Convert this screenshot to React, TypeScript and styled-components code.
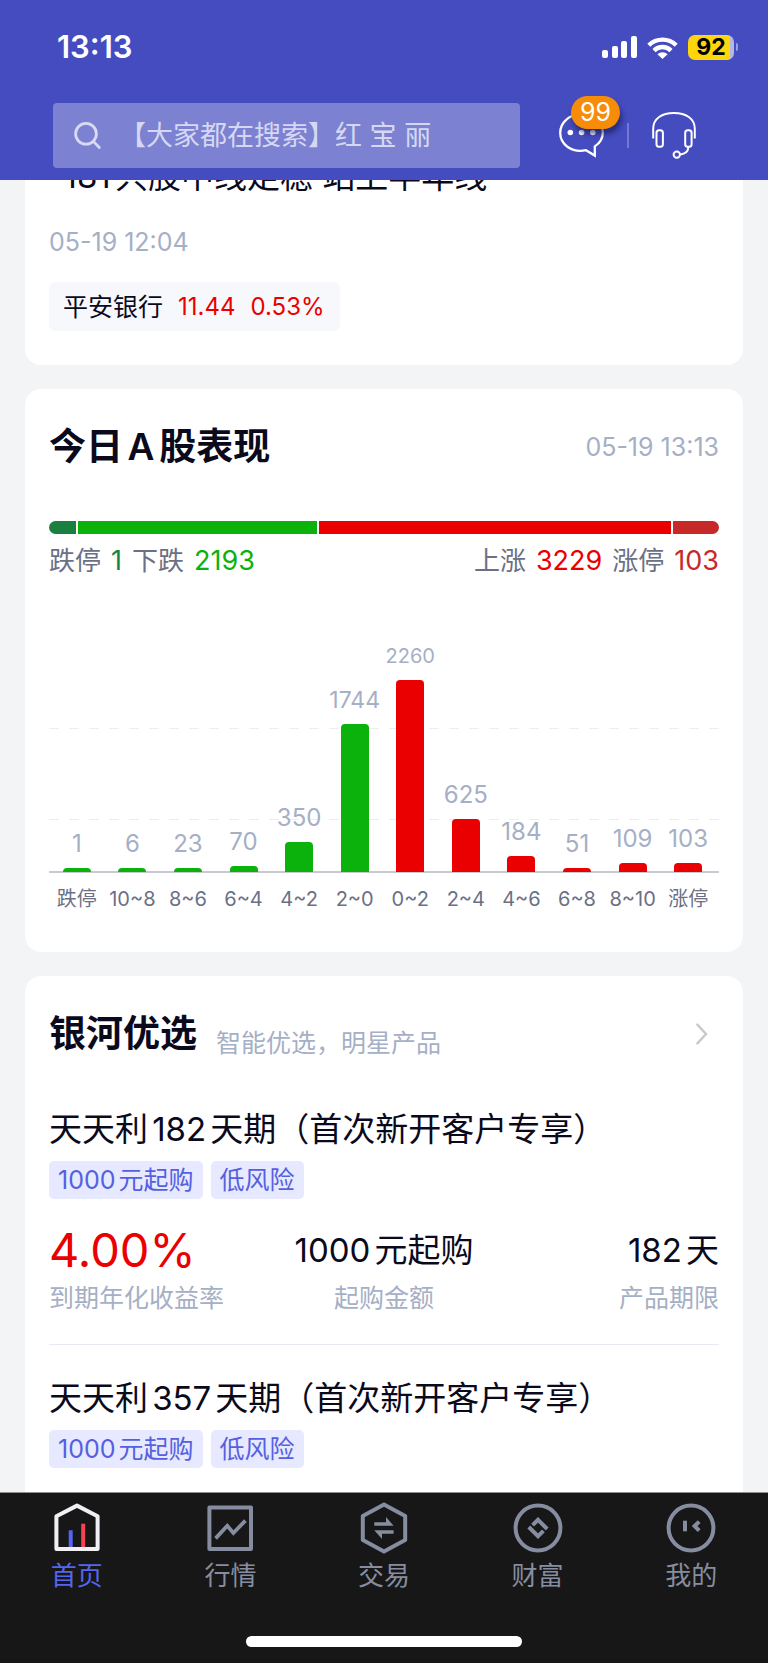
import React from 'react';
import styled, { createGlobalStyle } from 'styled-components';

const color = {
  brand: '#444cbf',
  ink: '#0a0a1c',
  slate: '#6b7085',
  muted: '#a5afc5',
  rise: '#ea0000',
  limitUp: '#c72828',
  fall: '#0bb20b',
  limitDown: '#1a8040',
  page: '#f3f4f6',
  tab: '#868da0',
};

const GlobalStyle = createGlobalStyle`
  *, *::before, *::after { box-sizing: border-box; }
  body {
    margin: 0;
    background: ${color.page};
    color: ${color.ink};
    font-family: Inter, "Noto Sans CJK SC", sans-serif;
    text-autospace: normal;
  }
  h2, h3, p, dl, dt, dd, ul { margin: 0; padding: 0; font-weight: 400; }
  button, input { font-family: inherit; }
  button { border: 0; padding: 0; background: none; color: inherit; cursor: pointer; }
  svg { display: block; }
`;

const Screen = styled.div`
  display: flex;
  flex-direction: column;
  height: 100vh;
  overflow: hidden;
`;

/* ---------- header ---------- */

const Header = styled.header`
  flex: none;
  padding-bottom: 12px;
  background: ${color.brand};
  color: #fff;
`;

const StatusBar = styled.div`
  display: flex;
  align-items: center;
  justify-content: space-between;
  height: 94px;
  padding: 0 30px 0 57px;
`;

const Clock = styled.time`
  font-size: 31px;
  line-height: 36px;
  font-weight: 600;
`;

const StatusIcons = styled.div`
  display: flex;
  align-items: center;
  gap: 10px;
`;

const Battery = styled.div`
  display: flex;
  align-items: center;
  gap: 2px;
`;

const BatteryBody = styled.span`
  width: 46px;
  height: 25px;
  border-radius: 7px;
  background: linear-gradient(to right, #ffd60a 42px, #b4b7e3 42px);
  color: #000;
  font-size: 23px;
  line-height: 25px;
  font-weight: 700;
  text-align: center;
`;

const BatteryTip = styled.span`
  width: 2px;
  height: 8px;
  border-radius: 0 2px 2px 0;
  background: #9a9edb;
`;

const SearchRow = styled.div`
  display: flex;
  align-items: center;
  gap: 23px;
  padding: 9px 72px 0 53px;
`;

const SearchBox = styled.label`
  flex: 1;
  display: flex;
  align-items: center;
  gap: 18px;
  min-width: 0;
  height: 65px;
  margin-right: 16px;
  padding-left: 21px;
  border-radius: 4px;
  background: #7c82d1;
`;

const SearchInput = styled.input`
  flex: 1;
  min-width: 0;
  height: 40px;
  padding: 0;
  border: 0;
  outline: 0;
  background: none;
  color: #fff;
  font-size: 27px;
  &::placeholder { color: #d6d8f3; opacity: 1; }
`;

const IconButton = styled.button`
  position: relative;
  flex: none;
`;

const Badge = styled.span`
  position: absolute;
  left: 12px;
  top: -17px;
  width: 49px;
  height: 33px;
  border-radius: 17px;
  background: #f78c08;
  box-shadow: 2px 5px 5px rgba(20, 24, 80, 0.6);
  font-size: 25px;
  line-height: 33px;
  text-align: center;
`;

const HeaderDivider = styled.span`
  width: 2px;
  height: 25px;
  background: #7379d1;
`;

/* ---------- feed ---------- */

const Feed = styled.main`
  flex: 1;
  min-height: 0;
  display: flex;
  flex-direction: column;
  gap: 24px;
  padding: 0 25px;
  overflow: hidden;
`;

const Card = styled.section`
  flex: none;
  padding: 34px 24px;
  border-radius: 16px;
  background: #fff;
`;

/* The feed is scrolled, so the top of this card lies behind the header. */
const NewsCard = styled(Card)`
  margin-top: -62px;
`;

const NewsTitle = styled.h3`
  font-size: 33px;
  line-height: 48px;
`;

const NewsTime = styled.p`
  margin-top: 26px;
  color: ${color.muted};
  font-size: 25px;
  line-height: 32px;
`;

const StockChip = styled.a`
  display: inline-flex;
  align-items: center;
  gap: 15px;
  height: 49px;
  margin-top: 24px;
  padding: 0 15px 0 14px;
  border-radius: 6px;
  background: #f7f8fc;
  color: ${color.ink};
  font-size: 25px;
  line-height: 32px;
  text-decoration: none;
  vertical-align: top;
`;

const StockFigure = styled.span`
  color: ${color.rise};
  font-size: 24px;
`;

const CardHead = styled.div`
  display: flex;
  align-items: center;
  justify-content: space-between;
`;

const CardTitle = styled.h2`
  font-size: 37px;
  line-height: 48px;
  font-weight: 600;
`;

const CardTime = styled.time`
  color: ${color.muted};
  font-size: 25px;
  line-height: 32px;
`;

/* ---------- market breadth ---------- */

const MarketCard = styled(Card)`
  padding-bottom: 41px;
`;

const Breadth = styled.div`
  display: flex;
  gap: 2px;
  height: 13px;
  margin-top: 50px;
  border-radius: 7px;
  overflow: hidden;
`;

const Segment = styled.span<{ $share: number; $color: string }>`
  flex: ${(p) => p.$share} 1 0;
  background: ${(p) => p.$color};
`;

const Legend = styled.div`
  display: flex;
  justify-content: space-between;
  margin-top: 9px;
  color: ${color.slate};
  font-size: 26px;
  line-height: 36px;
`;

const LegendGroup = styled.div`
  display: flex;
  gap: 10px;
`;

const Count = styled.span<{ $color: string }>`
  color: ${(p) => p.$color};
  font-size: 27px;
`;

const dash = 'repeating-linear-gradient(to right, #ededf0 0 10px, transparent 10px 20px)';

const Plot = styled.div`
  display: flex;
  height: 294px;
  padding-right: 3px;
  border-bottom: 2px solid #c9cad1;
  background:
    ${dash} 0 149px / 100% 1px no-repeat,
    ${dash} 0 240px / 100% 1px no-repeat;
`;

/* Bars overlap the upper pixel of the axis line. */
const Column = styled.div`
  flex: 1 1 0;
  min-width: 0;
  display: flex;
  flex-direction: column;
  align-items: center;
  justify-content: flex-end;
  margin-bottom: -1px;
`;

const Value = styled.span<{ $size: number }>`
  margin-bottom: 9px;
  color: ${color.muted};
  font-size: ${(p) => p.$size}px;
  line-height: 30px;
  white-space: nowrap;
`;

const Bar = styled.span<{ $color: string }>`
  width: 28px;
  border-radius: 4px 4px 0 0;
  background: ${(p) => p.$color};
`;

const AxisLabels = styled.div`
  display: flex;
  margin-top: 14px;
  padding-right: 3px;
`;

const AxisLabel = styled.span`
  flex: 1 1 0;
  min-width: 0;
  display: flex;
  justify-content: center;
  color: ${color.slate};
  font-size: 20px;
  line-height: 24px;
  white-space: nowrap;
`;

/* ---------- products ---------- */

const ProductCard = styled(Card)`
  flex: 1;
  padding-bottom: 0;
  border-radius: 16px 16px 0 0;
`;

const HeadGroup = styled.div`
  display: flex;
  align-items: flex-end;
  gap: 19px;
`;

const Subtitle = styled.p`
  color: ${color.muted};
  font-size: 25px;
  line-height: 30px;
`;

const MoreButton = styled.button`
  padding: 0 11px;
`;

const Product = styled.article`
  padding-top: 29px;
  &:first-of-type { padding-top: 47px; }
  &:not(:last-of-type) {
    padding-bottom: 31px;
    border-bottom: 1px solid #e8e9f2;
  }
`;

const ProductName = styled.h3`
  font-size: 33px;
  line-height: 48px;
`;

const Tags = styled.div`
  display: flex;
  gap: 8px;
  margin-top: 8px;
`;

const Tag = styled.span`
  padding: 0 9px;
  border-radius: 5px;
  background: #e6e9ff;
  color: #5560e0;
  font-size: 25px;
  line-height: 38px;
`;

const Stats = styled.dl`
  display: grid;
  grid-template-columns: repeat(3, 1fr);
  margin-top: 22px;
`;

const Stat = styled.div`
  display: flex;
  flex-direction: column-reverse;
  gap: 4px;
  &:nth-child(2) { text-align: center; }
  &:nth-child(3) { text-align: right; }
`;

const StatLabel = styled.dt`
  color: ${color.muted};
  font-size: 25px;
  line-height: 30px;
`;

const StatValue = styled.dd<{ $rate?: boolean }>`
  color: ${(p) => (p.$rate ? color.rise : color.ink)};
  font-size: ${(p) => (p.$rate ? 47 : 33)}px;
  line-height: 58px;
`;

/* ---------- tab bar ---------- */

const Footer = styled.footer`
  flex: none;
  background: #171717;
  border-top: 1px solid #8e8e8e;
  padding: 9px 0 16px;
`;

const TabBar = styled.nav`
  display: flex;
`;

const Tab = styled.a<{ $active?: boolean }>`
  flex: 1;
  display: flex;
  flex-direction: column;
  align-items: center;
  gap: 4px;
  color: ${(p) => (p.$active ? '#5566ee' : color.tab)};
  font-size: 26px;
  line-height: 36px;
  text-decoration: none;
`;

const HomeIndicator = styled.div`
  width: 36%;
  height: 11px;
  margin: 42px auto 0;
  border-radius: 6px;
  background: #fff;
`;

/* ---------- icons ---------- */

const SignalIcon = () => (
  <svg width="35" height="22" fill="#fff" aria-hidden="true">
    <rect x="0" y="14" width="6" height="8" rx="2" />
    <rect x="10" y="10" width="6" height="12" rx="2" />
    <rect x="19" y="5" width="6" height="17" rx="2" />
    <rect x="29" y="0" width="6" height="22" rx="2" />
  </svg>
);

const WifiIcon = () => (
  <svg width="31" height="23" viewBox="0 0 31 23" aria-hidden="true">
    <g fill="none" stroke="#fff" strokeWidth="4.4">
      <path d="M1.8 9.2A19.6 19.6 0 0 1 29.2 9.2" />
      <path d="M7 14.6A12 12 0 0 1 24 14.6" />
    </g>
    <path d="M10.4 18.2A7.4 7.4 0 0 1 20.6 18.2L15.5 23Z" fill="#fff" />
  </svg>
);

const SearchIcon = () => (
  <svg width="27" height="27" viewBox="0 0 27 27" fill="none" stroke="#d9dbf4" strokeWidth="2.8" strokeLinecap="round" aria-hidden="true">
    <circle cx="12" cy="11.8" r="10.4" />
    <path d="M19.4 19.4L25.3 25.5" />
  </svg>
);

const ChatIcon = () => (
  <svg width="45" height="45" viewBox="0 0 45 45" aria-hidden="true">
    <path
      d="M27 37.2C12.5 40 1.2 31.5 1.2 19.8C1.2 9.3 10.6 1.2 22.4 1.2S43.8 9.3 43.8 19.8C43.8 25.6 40.8 30.2 35.8 33.4V42.6Z"
      fill="none"
      stroke="#fff"
      strokeWidth="2.3"
    />
    <g fill="#fff">
      <circle cx="11.3" cy="19.5" r="2.8" />
      <circle cx="22.6" cy="19.5" r="2.8" />
      <circle cx="33.8" cy="19.5" r="2.8" />
    </g>
  </svg>
);

const HeadsetIcon = () => (
  <svg width="44" height="48" viewBox="0 0 44 48" fill="none" stroke="#fff" strokeWidth="2" aria-hidden="true">
    <path d="M1.2 26.4V17C1.2 6.4 10 1 21.9 1S42.8 6.4 42.8 17V26.4" />
    <rect x="4.5" y="18.2" width="6.4" height="16.6" rx="2.6" />
    <rect x="33.2" y="18.2" width="6.4" height="16.6" rx="2.6" />
    <path d="M36.4 35.2C36 39.6 33.4 42 28.4 42.4" />
    <circle cx="24.8" cy="42.6" r="3.2" />
  </svg>
);

const ChevronIcon = () => (
  <svg width="12" height="22" viewBox="0 0 12 22" fill="none" stroke="#c8c9ce" strokeWidth="2.4" strokeLinecap="round" aria-hidden="true">
    <path d="M1.4 1.6L10 11L1.4 20.4" />
  </svg>
);

const TabIcon = ({ children }: { children: React.ReactNode }) => (
  <svg width="52" height="52" viewBox="0 0 52 52" fill="none" stroke={color.tab} strokeWidth="4" aria-hidden="true">
    {children}
  </svg>
);

const tabs = [
  {
    name: '首页',
    icon: (
      <>
        <path d="M5.4 14.2L26 3.6L46.6 14.2V47H5.4Z" stroke="#f0f0f4" strokeLinejoin="round" />
        <path d="M19.7 28.3V45" stroke="#5566ee" />
        <path d="M32.2 21.7V45" stroke="#f54550" />
      </>
    ),
  },
  {
    name: '行情',
    icon: (
      <>
        <rect x="5.4" y="5.4" width="41.6" height="41.6" strokeLinejoin="round" />
        <path d="M11.6 36.4L23.3 23.8L29.4 31L41.4 18.6" strokeWidth="3.8" />
      </>
    ),
  },
  {
    name: '交易',
    icon: (
      <>
        <path d="M26 2.6L47.2 14V38L26 49.4L4.8 38V14Z" strokeLinejoin="round" />
        <path d="M16.3 20.3H28V15L35.6 23.8H16.3ZM35.6 31.7H24V37L16.3 28.2H35.6Z" fill={color.tab} stroke="none" />
      </>
    ),
  },
  {
    name: '财富',
    icon: (
      <>
        <circle cx="26" cy="26" r="22.4" />
        <path d="M20.6 23.2L26 17.8L35.2 27" />
        <path d="M16.8 25L26 34.2L31.4 28.8" />
      </>
    ),
  },
  {
    name: '我的',
    icon: (
      <>
        <circle cx="26" cy="26" r="22.4" />
        <path d="M20 18.7V29.3" />
        <path d="M34.2 19.6L29.6 24L34.2 28.6" />
      </>
    ),
  },
];

/* ---------- data ---------- */

const distribution = [
  { range: '跌停', count: 1 },
  { range: '10~8', count: 6 },
  { range: '8~6', count: 23 },
  { range: '6~4', count: 70 },
  { range: '4~2', count: 350 },
  { range: '2~0', count: 1744 },
  { range: '0~2', count: 2260 },
  { range: '2~4', count: 625 },
  { range: '4~6', count: 184 },
  { range: '6~8', count: 51 },
  { range: '8~10', count: 109 },
  { range: '涨停', count: 103 },
];

const MAX_BAR = 192;
const MIN_BAR = 4;
const peak = Math.max(...distribution.map((d) => d.count));
const barHeight = (count: number) => Math.max(MIN_BAR, Math.round((count / peak) * MAX_BAR));
const valueSize = (count: number) => (count >= 2000 ? 20 : count >= 1000 ? 23 : 24);

const products = [
  { name: '天天利182天期（首次新开客户专享）', rate: '4.00%', days: '182天' },
  { name: '天天利357天期（首次新开客户专享）' },
];

export default function App() {
  return (
    <>
      <GlobalStyle />
      <Screen>
        <Header>
          <StatusBar>
            <Clock>13:13</Clock>
            <StatusIcons>
              <SignalIcon />
              <WifiIcon />
              <Battery>
                <BatteryBody>92</BatteryBody>
                <BatteryTip />
              </Battery>
            </StatusIcons>
          </StatusBar>
          <SearchRow>
            <SearchBox>
              <SearchIcon />
              <SearchInput type="search" aria-label="搜索" placeholder="【大家都在搜索】红 宝 丽" />
            </SearchBox>
            <IconButton type="button" aria-label="消息">
              <ChatIcon />
              <Badge>99</Badge>
            </IconButton>
            <HeaderDivider />
            <IconButton type="button" aria-label="客服">
              <HeadsetIcon />
            </IconButton>
          </SearchRow>
        </Header>

        <Feed>
          <NewsCard>
            <NewsTitle>“181只股中线走稳 站上半年线</NewsTitle>
            <NewsTime>05-19 12:04</NewsTime>
            <StockChip href="#stock">
              平安银行
              <StockFigure>11.44</StockFigure>
              <StockFigure>0.53%</StockFigure>
            </StockChip>
          </NewsCard>

          <MarketCard>
            <CardHead>
              <CardTitle>今日A股表现</CardTitle>
              <CardTime>05-19 13:13</CardTime>
            </CardHead>
            <Breadth>
              <Segment $share={27} $color={color.limitDown} />
              <Segment $share={239} $color={color.fall} />
              <Segment $share={352} $color={color.rise} />
              <Segment $share={46} $color={color.limitUp} />
            </Breadth>
            <Legend>
              <LegendGroup>
                <span>跌停</span>
                <Count $color={color.limitDown}>1</Count>
                <span>下跌</span>
                <Count $color={color.fall}>2193</Count>
              </LegendGroup>
              <LegendGroup>
                <span>上涨</span>
                <Count $color={color.rise}>3229</Count>
                <span>涨停</span>
                <Count $color={color.limitUp}>103</Count>
              </LegendGroup>
            </Legend>
            <Plot>
              {distribution.map((d, i) => (
                <Column key={d.range}>
                  <Value $size={valueSize(d.count)}>{d.count}</Value>
                  <Bar $color={i < 6 ? color.fall : color.rise} style={{ height: barHeight(d.count) }} />
                </Column>
              ))}
            </Plot>
            <AxisLabels>
              {distribution.map((d) => (
                <AxisLabel key={d.range}>{d.range}</AxisLabel>
              ))}
            </AxisLabels>
          </MarketCard>

          <ProductCard>
            <CardHead>
              <HeadGroup>
                <CardTitle>银河优选</CardTitle>
                <Subtitle>智能优选，明星产品</Subtitle>
              </HeadGroup>
              <MoreButton type="button" aria-label="更多">
                <ChevronIcon />
              </MoreButton>
            </CardHead>
            {products.map((p) => (
              <Product key={p.name}>
                <ProductName>{p.name}</ProductName>
                <Tags>
                  <Tag>1000元起购</Tag>
                  <Tag>低风险</Tag>
                </Tags>
                {p.rate && (
                  <Stats>
                    <Stat>
                      <StatLabel>到期年化收益率</StatLabel>
                      <StatValue $rate>{p.rate}</StatValue>
                    </Stat>
                    <Stat>
                      <StatLabel>起购金额</StatLabel>
                      <StatValue>1000元起购</StatValue>
                    </Stat>
                    <Stat>
                      <StatLabel>产品期限</StatLabel>
                      <StatValue>{p.days}</StatValue>
                    </Stat>
                  </Stats>
                )}
              </Product>
            ))}
          </ProductCard>
        </Feed>

        <Footer>
          <TabBar>
            {tabs.map((t, i) => (
              <Tab key={t.name} href={`#tab-${i}`} $active={i === 0}>
                <TabIcon>{t.icon}</TabIcon>
                {t.name}
              </Tab>
            ))}
          </TabBar>
          <HomeIndicator />
        </Footer>
      </Screen>
    </>
  );
}
